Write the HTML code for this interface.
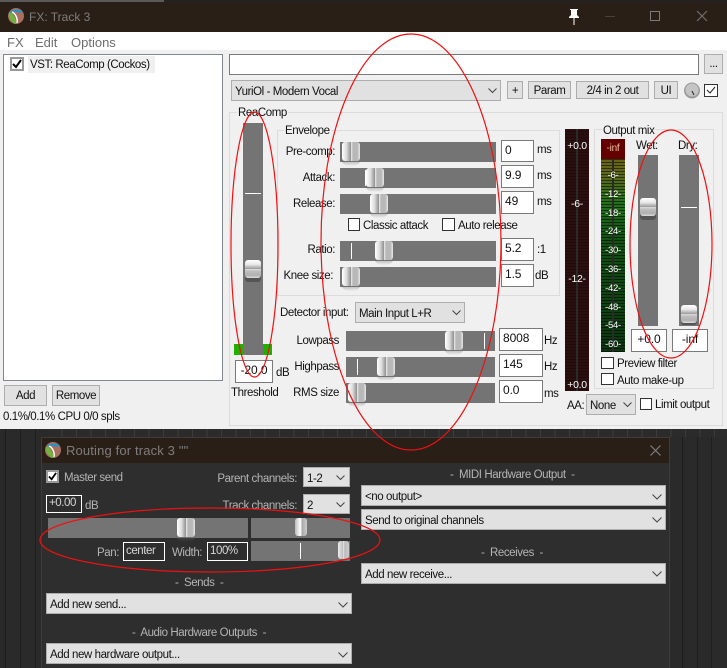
<!DOCTYPE html>
<html><head><meta charset="utf-8"><style>
html,body{margin:0;padding:0;background:#2b2b2b}
#p{position:relative;width:727px;height:668px;overflow:hidden;font:11.5px/14px "Liberation Sans",sans-serif;letter-spacing:-.42px;color:#111;background:#2b2b2b}
#p div,#p span,#p svg{position:absolute;box-sizing:border-box}
.t{white-space:nowrap;line-height:18px}
.r{white-space:nowrap;line-height:18px;text-align:right}
.s{background:#747474}
.i{background:#fff;border:1px solid #7a7a7a;padding:2px 0 0 3px;line-height:15px;font-size:12px;letter-spacing:-.1px}
.b{background:#e1e1e1;border:1px solid #adadad;text-align:center;line-height:18px}
.c{background:#e1e1e1;border:1px solid #adadad;line-height:22px;padding-left:3px;white-space:nowrap}
.cb{background:#fff;border:1px solid #333}
.h{width:20px;height:24px;border-radius:3px 3px 8px 8px;background:linear-gradient(#0000 0 18px,#6a6a6a55 20px,#0000 24px)}
.h:before{content:"";position:absolute;left:1px;top:0;width:18px;height:19px;border-radius:3px;background:linear-gradient(90deg,#fff 0,#ddd 25%,#8f8f8f 50%,#eee 52%,#eee 56%,#b8b8b8 58%,#b8b8b8 85%,#e8e8e8 100%)}
.v{width:16px;height:22px;border-radius:3px;background:#555}
.v:before{content:"";position:absolute;left:0;top:0;width:16px;height:18px;border-radius:3px;background:linear-gradient(#fff 0,#e8e8e8 25%,#999 50%,#e6e6e6 52%,#c0c0c0 60%,#b0b0b0 85%,#ddd 100%)}
.tk{background:#fff}
.g{border:1px solid #dcdcdc}
.m{color:#fff;font-size:10.5px;letter-spacing:-.3px;text-align:center;line-height:12px;white-space:nowrap}
.d{color:#b4b4b4}
.di{background:#2e2e2e;border:1px solid #fff;color:#d6d6d6;line-height:15px;padding:0 0 0 2px;white-space:nowrap}
.l{top:428px;width:1px;height:240px;background:#1e1e1e}
</style></head><body><div id="p">

<!-- DAW background -->
<div style="left:0;top:0;width:164px;height:2px;background:#5a5a5a"></div>
<div style="left:164px;top:0;width:563px;height:2px;background:#222"></div>
<div style="left:0;top:428px;width:727px;height:240px;background:#2a2a2a"></div>
<div class="l" style="left:5px"></div><div class="l" style="left:20px"></div><div class="l" style="left:35px"></div>
<div class="l" style="left:682px"></div><div class="l" style="left:697px"></div><div class="l" style="left:711px"></div>
<div style="left:48px;top:429px;width:679px;height:8px;background:repeating-linear-gradient(90deg,#2b2b2b 0 13.5px,#3c3c3c 13.5px 14.5px)"></div>

<!-- FX window -->
<div style="left:0;top:2px;width:727px;height:30px;background:#2a1f17"></div>
<svg style="left:8px;top:8px" width="16" height="16" viewBox="0 0 16 16"><circle cx="8" cy="8" r="8" fill="#a9705f"/><path d="M1 6C3 1 11 0 15 4L11 5C8 3 4 4 1 6Z" fill="#2d8fc4"/><path d="M1 5C0 10 4 15 8 16C9 13 6 8 4 5Z" fill="#6fb43c"/><path d="M4 4C7 5 10 10 9 15" stroke="#fff" stroke-width="1.4" fill="none"/></svg>
<span class="t" style="left:29px;top:8px;color:#7d7d7d;font-size:12px;letter-spacing:0">FX: Track 3</span>
<svg style="left:566px;top:8px" width="16" height="17" viewBox="0 0 16 17"><path d="M4 1H12V2H11V7L13 9V10H3V9L5 7V2H4Z M7.5 10H8.5V17H7.5Z" fill="#fff"/></svg>
<div style="left:605px;top:16px;width:10px;height:1px;background:#4a4038"></div>
<div style="left:650px;top:11px;width:10px;height:10px;border:1px solid #7a7a7a"></div>
<svg style="left:696px;top:10px" width="12" height="12" viewBox="0 0 12 12"><path d="M1 1L11 11M11 1L1 11" stroke="#6f6f6f" stroke-width="1.2"/></svg>

<div style="left:0;top:32px;width:727px;height:18px;background:#fff"></div>
<span class="t" style="left:7px;top:34px;color:#6d6d6d;font-size:13px;letter-spacing:0">FX</span>
<span class="t" style="left:35px;top:34px;color:#6d6d6d;font-size:13px;letter-spacing:0">Edit</span>
<span class="t" style="left:71px;top:34px;color:#6d6d6d;font-size:13px;letter-spacing:0">Options</span>
<div style="left:0;top:50px;width:727px;height:379px;background:#f0f0f0"></div>

<!-- FX list -->
<div style="left:3px;top:54px;width:220px;height:327px;background:#fff;border:1px solid #828790"></div>
<div style="left:28px;top:56px;width:127px;height:17px;background:#f0f0f0"></div>
<div style="left:10px;top:57px;width:14px;height:14px;background:#fff;border:2px solid #999"></div>
<svg style="left:12px;top:59px" width="10" height="10" viewBox="0 0 10 10"><path d="M1 5L4 8L9 1" stroke="#000" stroke-width="2" fill="none"/></svg>
<span class="t" style="left:30px;top:56px">VST: ReaComp (Cockos)</span>
<div class="b" style="left:4px;top:385px;width:43px;height:21px;line-height:21px">Add</div>
<div class="b" style="left:52px;top:385px;width:48px;height:21px;line-height:21px">Remove</div>
<span class="t" style="left:3px;top:408px">0.1%/0.1% CPU 0/0 spls</span>

<!-- top row -->
<div style="left:229px;top:54px;width:470px;height:21px;background:#fff;border:1px solid #7a7a7a"></div>
<div class="b" style="left:704px;top:54px;width:19px;height:20px">...</div>
<div class="c" style="left:231px;top:80px;width:270px;height:21px">YuriOl - Modern Vocal</div>
<svg style="left:488px;top:88px" width="9" height="6" viewBox="0 0 9 6"><path d="M0.5 0.5L4.5 4.5L8.5 0.5" stroke="#444" fill="none"/></svg>
<div class="b" style="left:507px;top:81px;width:16px;height:18px">+</div>
<div class="b" style="left:528px;top:81px;width:43px;height:18px">Param</div>
<div class="b" style="left:576px;top:81px;width:73px;height:18px">2/4 in 2 out</div>
<div class="b" style="left:654px;top:81px;width:24px;height:18px">UI</div>
<svg style="left:684px;top:82px" width="16" height="17" viewBox="0 0 16 17"><circle cx="8" cy="8.5" r="8" fill="#9a9a9a"/><circle cx="8" cy="8" r="6.5" fill="#c4c4c4"/><path d="M8 9L10 13" stroke="#222"/></svg>
<div style="left:704px;top:84px;width:14px;height:13px;background:#fff;border:1px solid #333"></div>
<svg style="left:706px;top:86px" width="10" height="9" viewBox="0 0 10 9"><path d="M1 4L4 7L9 1" stroke="#222" fill="none"/></svg>

<!-- ReaComp group -->
<div class="g" style="left:229px;top:112px;width:494px;height:314px"></div>
<span class="t" style="left:237px;top:104px;height:16px;background:#f0f0f0;padding:0 1px">ReaComp</span>
<div class="s" style="left:243px;top:123px;width:20px;height:232px"></div>
<div style="left:234px;top:344px;width:9px;height:11px;background:#22b000"></div>
<div style="left:263px;top:344px;width:9px;height:11px;background:#22b000"></div>
<div class="tk" style="left:245px;top:193px;width:16px;height:1px"></div>
<div class="v" style="left:245px;top:260px"></div>
<div class="i" style="left:235px;top:360px;width:38px;height:23px;text-align:center;padding-left:0">-20.0</div>
<span class="t" style="left:276px;top:364px">dB</span>
<span class="t" style="left:231px;top:384px">Threshold</span>

<!-- Envelope -->
<div class="g" style="left:277px;top:130px;width:283px;height:166px"></div>
<span class="t" style="left:284px;top:122px;height:16px;background:#f0f0f0;padding:0 1px">Envelope</span>
<span class="r" style="right:392px;top:143px">Pre-comp:</span>
<span class="r" style="right:392px;top:169px">Attack:</span>
<span class="r" style="right:392px;top:195px">Release:</span>
<span class="r" style="right:392px;top:241px">Ratio:</span>
<span class="r" style="right:394px;top:267px">Knee size:</span>
<div class="s" style="left:340px;top:142px;width:156px;height:20px"></div>
<div class="s" style="left:340px;top:168px;width:156px;height:20px"></div>
<div class="s" style="left:340px;top:194px;width:156px;height:20px"></div>
<div class="s" style="left:340px;top:241px;width:156px;height:20px"></div>
<div class="s" style="left:340px;top:267px;width:156px;height:20px"></div>
<div class="tk" style="left:365px;top:170px;width:1px;height:16px"></div>
<div class="tk" style="left:351px;top:243px;width:1px;height:16px"></div>
<div class="h" style="left:341px;top:142px"></div>
<div class="h" style="left:365px;top:168px"></div>
<div class="h" style="left:369px;top:194px"></div>
<div class="h" style="left:374px;top:241px"></div>
<div class="h" style="left:341px;top:267px"></div>
<div class="i" style="left:501px;top:140px;width:33px;height:22px">0</div>
<div class="i" style="left:501px;top:165px;width:33px;height:23px">9.9</div>
<div class="i" style="left:501px;top:191px;width:33px;height:23px">49</div>
<div class="i" style="left:501px;top:238px;width:33px;height:23px">5.2</div>
<div class="i" style="left:501px;top:264px;width:33px;height:23px">1.5</div>
<span class="t" style="left:537px;top:141px">ms</span>
<span class="t" style="left:537px;top:167px">ms</span>
<span class="t" style="left:537px;top:193px">ms</span>
<span class="t" style="left:537px;top:241px">:1</span>
<span class="t" style="left:535px;top:267px">dB</span>
<div class="cb" style="left:348px;top:218px;width:12px;height:13px"></div>
<span class="t" style="left:363px;top:217px">Classic attack</span>
<div class="cb" style="left:442px;top:218px;width:13px;height:13px"></div>
<span class="t" style="left:458px;top:217px">Auto release</span>

<!-- Detector -->
<span class="t" style="left:280px;top:304px">Detector input:</span>
<div class="c" style="left:355px;top:302px;width:110px;height:21px">Main Input L+R</div>
<svg style="left:452px;top:310px" width="9" height="6" viewBox="0 0 9 6"><path d="M0.5 0.5L4.5 4.5L8.5 0.5" stroke="#444" fill="none"/></svg>
<span class="r" style="right:388px;top:332px">Lowpass</span>
<span class="r" style="right:388px;top:358px">Highpass</span>
<span class="r" style="right:388px;top:384px">RMS size</span>
<div class="s" style="left:346px;top:331px;width:149px;height:20px"></div>
<div class="s" style="left:346px;top:357px;width:149px;height:20px"></div>
<div class="s" style="left:346px;top:383px;width:149px;height:20px"></div>
<div class="tk" style="left:484px;top:333px;width:1px;height:16px"></div>
<div class="tk" style="left:357px;top:359px;width:1px;height:16px"></div>
<div class="h" style="left:444px;top:331px"></div>
<div class="h" style="left:376px;top:357px"></div>
<div class="h" style="left:347px;top:383px"></div>
<div class="i" style="left:499px;top:328px;width:44px;height:23px">8008</div>
<div class="i" style="left:499px;top:354px;width:44px;height:23px">145</div>
<div class="i" style="left:499px;top:380px;width:44px;height:23px">0.0</div>
<span class="t" style="left:544px;top:332px">Hz</span>
<span class="t" style="left:544px;top:358px">Hz</span>
<span class="t" style="left:544px;top:385px">ms</span>

<!-- Left meter -->
<div style="left:565px;top:129px;width:24px;height:262px;background:repeating-linear-gradient(#2b0f0f 0 2px,#200b0b 2px 3px)"></div>
<div style="left:576px;top:129px;width:2px;height:262px;background:#2a2a2a"></div>
<div class="m" style="left:565px;top:140px;width:24px">+0.0</div>
<div class="m" style="left:565px;top:198px;width:24px">-6-</div>
<div class="m" style="left:565px;top:273px;width:24px">-12-</div>
<div class="m" style="left:565px;top:379px;width:24px">+0.0</div>

<!-- Output mix -->
<div class="g" style="left:594px;top:129px;width:120px;height:260px"></div>
<span class="t" style="left:602px;top:122px;height:16px;background:#f0f0f0;padding:0 1px">Output mix</span>
<div style="left:601px;top:139px;width:24px;height:213px;background:linear-gradient(#5c5c1a 0,#66661a 14%,#25701a 30%,#125412 45%,#0c3510 100%)"></div>
<div style="left:601px;top:139px;width:24px;height:213px;background:repeating-linear-gradient(#0000 0 2px,#00000088 2px 3px)"></div>
<div style="left:601px;top:139px;width:24px;height:20px;background:#650000"></div>
<div style="left:612px;top:159px;width:2px;height:193px;background:#2a2a2a"></div>
<div class="m" style="left:601px;top:143px;width:24px;color:#f0c0a0;font-size:10px">-inf</div>
<div class="m" style="left:601px;top:170px;width:24px;font-size:9.5px">-6-</div>
<div class="m" style="left:601px;top:189px;width:24px;font-size:9.5px">-12-</div>
<div class="m" style="left:601px;top:208px;width:24px;font-size:9.5px">-18-</div>
<div class="m" style="left:601px;top:226px;width:24px;font-size:9.5px">-24-</div>
<div class="m" style="left:601px;top:245px;width:24px;font-size:9.5px">-30-</div>
<div class="m" style="left:601px;top:264px;width:24px;font-size:9.5px">-36-</div>
<div class="m" style="left:601px;top:283px;width:24px;font-size:9.5px">-42-</div>
<div class="m" style="left:601px;top:302px;width:24px;font-size:9.5px">-48-</div>
<div class="m" style="left:601px;top:320px;width:24px;font-size:9.5px">-54-</div>
<div class="m" style="left:601px;top:339px;width:24px;font-size:9.5px">-60-</div>
<span class="t" style="left:636px;top:137px">Wet:</span>
<span class="t" style="left:678px;top:137px">Dry:</span>
<div class="s" style="left:638px;top:155px;width:20px;height:171px"></div>
<div class="s" style="left:679px;top:155px;width:20px;height:171px"></div>
<div class="tk" style="left:681px;top:207px;width:16px;height:1px"></div>
<div class="v" style="left:640px;top:198px"></div>
<div class="v" style="left:681px;top:305px;height:20px"></div>
<div class="i" style="left:631px;top:329px;width:36px;height:23px;text-align:center;padding-left:0">+0.0</div>
<div class="i" style="left:672px;top:329px;width:36px;height:23px;text-align:center;padding-left:0">-inf</div>
<div class="cb" style="left:601px;top:357px;width:13px;height:12px"></div>
<span class="t" style="left:617px;top:355px">Preview filter</span>
<div class="cb" style="left:601px;top:373px;width:13px;height:12px"></div>
<span class="t" style="left:617px;top:372px">Auto make-up</span>
<span class="t" style="left:567px;top:397px">AA:</span>
<div class="c" style="left:586px;top:394px;width:50px;height:21px">None</div>
<svg style="left:623px;top:402px" width="9" height="6" viewBox="0 0 9 6"><path d="M0.5 0.5L4.5 4.5L8.5 0.5" stroke="#444" fill="none"/></svg>
<div class="cb" style="left:640px;top:398px;width:12px;height:12px"></div>
<span class="t" style="left:655px;top:396px">Limit output</span>

<!-- Routing window -->
<div style="left:41px;top:437px;width:629px;height:231px;background:#2e2e2e;border:1px solid #3c3c3c;border-bottom:0"></div>
<div style="left:42px;top:438px;width:627px;height:25px;background:#2a1f17"></div>
<svg style="left:45px;top:442px" width="16" height="16" viewBox="0 0 16 16"><circle cx="8" cy="8" r="8" fill="#a9705f"/><path d="M1 6C3 1 11 0 15 4L11 5C8 3 4 4 1 6Z" fill="#2d8fc4"/><path d="M1 5C0 10 4 15 8 16C9 13 6 8 4 5Z" fill="#6fb43c"/><path d="M4 4C7 5 10 10 9 15" stroke="#fff" stroke-width="1.4" fill="none"/></svg>
<span class="t" style="left:66px;top:442px;color:#7d7d7d;font-size:13px;letter-spacing:.15px">Routing for track 3 ""</span>
<svg style="left:650px;top:445px" width="11" height="11" viewBox="0 0 11 11"><path d="M0.5 0.5L10.5 10.5M10.5 0.5L0.5 10.5" stroke="#7d7d7d" stroke-width="1.2"/></svg>

<div style="left:46px;top:470px;width:13px;height:13px;background:#fff;border:2px solid #999"></div>
<svg style="left:48px;top:472px" width="9" height="9" viewBox="0 0 10 10"><path d="M1 5L4 8L9 1" stroke="#000" stroke-width="2" fill="none"/></svg>
<span class="t d" style="left:64px;top:469px">Master send</span>
<span class="r d" style="right:430px;top:470px">Parent channels:</span>
<span class="r d" style="right:430px;top:497px">Track channels:</span>
<div class="c" style="left:303px;top:467px;width:47px;height:20px">1-2</div>
<svg style="left:336px;top:475px" width="9" height="6" viewBox="0 0 9 6"><path d="M0.5 0.5L4.5 4.5L8.5 0.5" stroke="#444" fill="none"/></svg>
<div class="c" style="left:303px;top:494px;width:47px;height:20px">2</div>
<svg style="left:336px;top:502px" width="9" height="6" viewBox="0 0 9 6"><path d="M0.5 0.5L4.5 4.5L8.5 0.5" stroke="#444" fill="none"/></svg>
<div class="di" style="left:46px;top:495px;width:36px;height:18px">+0.00</div>
<span class="t d" style="left:85px;top:497px">dB</span>
<div class="s" style="left:48px;top:518px;width:200px;height:20px"></div>
<div class="s" style="left:251px;top:518px;width:99px;height:20px"></div>
<div class="s" style="left:251px;top:541px;width:99px;height:20px"></div>
<div class="tk" style="left:300px;top:543px;width:1px;height:16px"></div>
<div class="h" style="left:176px;top:518px"></div>
<div style="left:295px;top:518px;width:12px;height:18px;border-radius:3px;background:linear-gradient(90deg,#bbb,#fff 45%,#aaa 60%,#ccc)"></div>
<div style="left:338px;top:541px;width:11px;height:18px;border-radius:3px;background:linear-gradient(90deg,#eee,#bbb 45%,#eee 50%,#bbb 60%,#ccc)"></div>
<span class="t d" style="left:97px;top:544px">Pan:</span>
<div class="di" style="left:123px;top:542px;width:42px;height:19px;line-height:16px">center</div>
<span class="t d" style="left:172px;top:544px">Width:</span>
<div class="di" style="left:207px;top:542px;width:41px;height:19px;line-height:16px">100%</div>

<span class="t d" style="left:175px;top:574px">-&nbsp; Sends &nbsp;-</span>
<div class="c" style="left:46px;top:593px;width:306px;height:21px">Add new send...</div>
<svg style="left:338px;top:602px" width="10" height="6" viewBox="0 0 10 6"><path d="M0.5 0.5L5 5L9.5 0.5" stroke="#444" fill="none"/></svg>
<span class="t d" style="left:132px;top:624px">-&nbsp; Audio Hardware Outputs &nbsp;-</span>
<div class="c" style="left:46px;top:643px;width:306px;height:21px">Add new hardware output...</div>
<svg style="left:338px;top:652px" width="10" height="6" viewBox="0 0 10 6"><path d="M0.5 0.5L5 5L9.5 0.5" stroke="#444" fill="none"/></svg>

<span class="t d" style="left:450px;top:466px">-&nbsp; MIDI Hardware Output &nbsp;-</span>
<div class="c" style="left:361px;top:485px;width:305px;height:21px">&lt;no output&gt;</div>
<svg style="left:652px;top:494px" width="10" height="6" viewBox="0 0 10 6"><path d="M0.5 0.5L5 5L9.5 0.5" stroke="#444" fill="none"/></svg>
<div class="c" style="left:361px;top:509px;width:305px;height:21px">Send to original channels</div>
<svg style="left:652px;top:517px" width="10" height="6" viewBox="0 0 10 6"><path d="M0.5 0.5L5 5L9.5 0.5" stroke="#444" fill="none"/></svg>
<span class="t d" style="left:481px;top:544px">-&nbsp; Receives &nbsp;-</span>
<div class="c" style="left:361px;top:563px;width:305px;height:21px">Add new receive...</div>
<svg style="left:652px;top:571px" width="10" height="6" viewBox="0 0 10 6"><path d="M0.5 0.5L5 5L9.5 0.5" stroke="#444" fill="none"/></svg>

<!-- red annotations -->
<svg style="left:0;top:0" width="727" height="668" viewBox="0 0 727 668" fill="none" stroke="#f01010" stroke-width="1.2">
<ellipse cx="254.5" cy="244.5" rx="23.5" ry="132.5"/>
<ellipse cx="411" cy="242" rx="90" ry="208"/>
<ellipse cx="671" cy="244" rx="41" ry="114"/>
<ellipse cx="210" cy="540" rx="170" ry="32"/>
</svg>
</div></body></html>
